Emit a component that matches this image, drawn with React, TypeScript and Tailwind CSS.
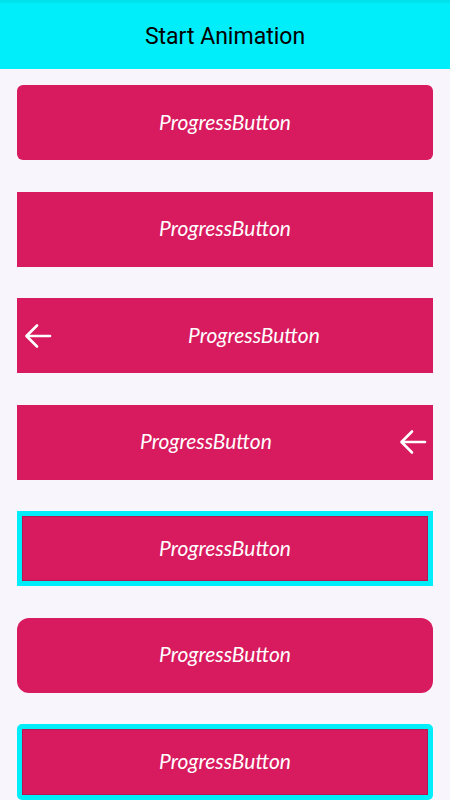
import React from "react";

const Arrow = () => (
  <svg width="28" height="28" viewBox="0 0 28 28" fill="none" stroke="white" strokeWidth="2.6" strokeLinecap="round" strokeLinejoin="round">
    <path d="M26 14H3" />
    <path d="M13 3.5L2.5 14L13 24.5" />
  </svg>
);

const label = "text-white text-[21px] italic leading-none pb-[3px]";
const font = { fontFamily: "Lato, 'Open Sans', sans-serif" };

export default function App() {
  return (
    <div className="w-[450px] h-[800px] overflow-hidden bg-[#F8F6FC]" style={{ fontFamily: "Roboto, sans-serif" }}>
      <div className="h-[69px] bg-[#00EEF9] border-t-[3px] border-[#00E2EC] flex items-center justify-center pt-[3px]">
        <span className="text-[23px] text-black">Start Animation</span>
      </div>
      <div className="px-[17px] pt-[16px] flex flex-col gap-[31.5px]" style={font}>
        <div className="h-[75px] bg-[#D81B5E] rounded-[6px] flex items-center justify-center">
          <span className={label}>ProgressButton</span>
        </div>
        <div className="h-[75px] bg-[#D81B5E] flex items-center justify-center">
          <span className={label}>ProgressButton</span>
        </div>
        <div className="h-[75px] bg-[#D81B5E] flex items-center pl-[7px]">
          <Arrow />
          <span className={label + " ml-[136px]"}>ProgressButton</span>
        </div>
        <div className="h-[75px] bg-[#D81B5E] flex items-center pr-[6px]">
          <span className={label + " ml-[123px]"}>ProgressButton</span>
          <div className="ml-auto flex"><Arrow /></div>
        </div>
        <div className="h-[75px] bg-[#D81B5E] border-[5px] border-[#00EEF9] shadow-[inset_0_0_0_1px_#b01a52] flex items-center justify-center">
          <span className={label}>ProgressButton</span>
        </div>
        <div className="h-[75px] bg-[#D81B5E] rounded-[12px] flex items-center justify-center">
          <span className={label}>ProgressButton</span>
        </div>
        <div className="h-[76px] bg-[#D81B5E] border-[5px] border-[#00EEF9] rounded-[5px] shadow-[inset_0_0_0_1px_#b01a52] flex items-center justify-center">
          <span className={label}>ProgressButton</span>
        </div>
      </div>
    </div>
  );
}
